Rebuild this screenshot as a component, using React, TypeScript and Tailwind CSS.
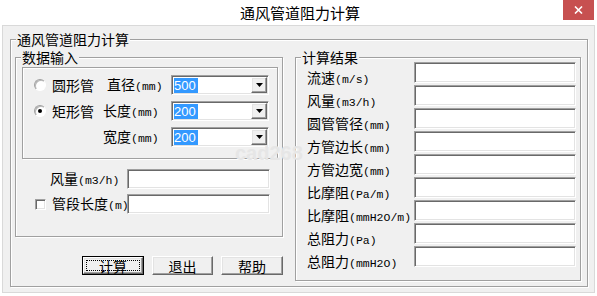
import React from "react";

const sunken =
  "border border-t-[#a0a0a0] border-l-[#a0a0a0] border-r-white border-b-white shadow-[inset_1px_1px_0_#696969,inset_-1px_-1px_0_#e3e3e3]";
const raised =
  "border border-t-white border-l-white border-r-[#696969] border-b-[#696969] shadow-[inset_-1px_-1px_0_#a0a0a0,inset_1px_1px_0_#e3e3e3]";

// ASCII part of a label (SimSun-like narrow glyphs)
function A({ children }: { children: React.ReactNode }) {
  return <span className="font-['Liberation_Mono',monospace] text-[11.5px]">{children}</span>;
}

function Group({
  label,
  className,
  children,
}: {
  label?: string;
  className?: string;
  children?: React.ReactNode;
}) {
  return (
    <div
      className={`relative border border-[#a0a0a0] shadow-[inset_1px_1px_0_#fff,1px_1px_0_#fff] ${className ?? ""}`}
    >
      {label && (
        <span className="absolute left-[5px] top-[-9px] bg-[#f0f0f0] px-px text-[14px] leading-[16px]">
          {label}
        </span>
      )}
      {children}
    </div>
  );
}

function Edit({ className }: { className?: string }) {
  return <div className={`bg-white ${sunken} ${className ?? ""}`} />;
}

function Combo({ value }: { value: string }) {
  return (
    <div className={`w-[98px] h-[20px] bg-white flex items-stretch p-px ${sunken}`}>
      <div className="flex-1 flex items-center pl-px">
        <span className="bg-[#3399ff] text-white font-['Liberation_Sans',sans-serif] text-[13px] leading-[15px] pr-[2px]">
          {value}
        </span>
      </div>
      <div className={`w-[16px] bg-[#f0f0f0] flex items-center justify-center ${raised}`}>
        <svg width="7" height="4" viewBox="0 0 7 4">
          <path d="M0 0H7L3.5 4Z" fill="#000" />
        </svg>
      </div>
    </div>
  );
}

function Radio({ checked }: { checked?: boolean }) {
  return (
    <span className="w-[12px] h-[12px] rounded-full bg-white flex items-center justify-center border border-t-[#a0a0a0] border-l-[#a0a0a0] border-r-white border-b-white shadow-[inset_1px_1px_0_#b8b8b8]">
      {checked && <span className="w-[4px] h-[4px] rounded-full bg-black" />}
    </span>
  );
}

function Check() {
  return <span className={`block w-[11px] h-[11px] bg-white ${sunken}`} />;
}

function Btn({ label, w, def }: { label: string; w: string; def?: boolean }) {
  if (def) {
    return (
      <button type="button" className={`${w} h-[19px] border border-black flex`}>
        <div className={`flex-1 flex bg-[#f0f0f0] ${raised}`}>
          <div className="flex-1 m-[2px] border border-dotted border-black flex items-center justify-center text-[14px] leading-[14px]">
            {label}
          </div>
        </div>
      </button>
    );
  }
  return (
    <button
      type="button"
      className={`${w} h-[19px] bg-[#f0f0f0] flex items-center justify-center text-[14px] leading-[14px] ${raised}`}
    >
      {label}
    </button>
  );
}

const results: React.ReactNode[] = [
  <>流速<A>(m/s)</A></>,
  <>风量<A>(m3/h)</A></>,
  <>圆管管径<A>(mm)</A></>,
  <>方管边长<A>(mm)</A></>,
  <>方管边宽<A>(mm)</A></>,
  <>比摩阻<A>(Pa/m)</A></>,
  <>比摩阻<A>(mmH2O/m)</A></>,
  <>总阻力<A>(Pa)</A></>,
  <>总阻力<A>(mmH2O)</A></>,
];

export default function App() {
  return (
    <div className="relative w-[597px] h-[296px] bg-white text-black font-['Noto_Sans_CJK_SC',sans-serif]">
      {/* Title bar */}
      <div className="h-[25px] flex items-center justify-center pl-[3px] text-[15px] leading-[20px]">
        通风管道阻力计算
      </div>
      <button
        type="button"
        aria-label="close"
        className="absolute right-[3px] top-0 w-[31px] h-[20px] bg-[#c75050] flex items-center justify-center"
      >
        <svg width="9" height="8" viewBox="0 0 9 8">
          <path d="M1 0.5L8 7.5M8 0.5L1 7.5" stroke="#fff" strokeWidth="1.6" />
        </svg>
      </button>

      {/* Window body */}
      <div className="ml-[2px] w-[593px] h-[268px] border border-[#d9d9d9] bg-[#f0f0f0] pt-[13px] pl-[7px]">
        <Group label="通风管道阻力计算" className="w-[578px] h-[248px]">
          <div className="flex gap-[12px] pl-[4px] pt-[17px]">
            {/* Left column */}
            <div className="w-[268px] flex flex-col">
              <Group label="数据输入" className="h-[180px]">
                <Group className="ml-[6px] mt-[9px] w-[256px] h-[92px]">
                  <div className="flex flex-col gap-[6px] pt-[7px] text-[14px] leading-[18px]">
                    <div className="h-[20px] flex items-center">
                      <div className="w-[29px] pl-[11px]">
                        <Radio />
                      </div>
                      <div className="w-[51px]">圆形管</div>
                      <div className="w-[68px] pl-[4px]">
                        直径<A>(mm)</A>
                      </div>
                      <Combo value="500" />
                    </div>
                    <div className="h-[20px] flex items-center">
                      <div className="w-[29px] pl-[11px]">
                        <Radio checked />
                      </div>
                      <div className="w-[51px]">矩形管</div>
                      <div className="w-[68px]">
                        长度<A>(mm)</A>
                      </div>
                      <Combo value="200" />
                    </div>
                    <div className="h-[20px] flex items-center">
                      <div className="w-[80px]" />
                      <div className="w-[68px]">
                        宽度<A>(mm)</A>
                      </div>
                      <Combo value="200" />
                    </div>
                  </div>
                </Group>

                <div className="mt-[10px] flex flex-col gap-[5px] text-[14px] leading-[18px]">
                  <div className="h-[20px] flex items-center">
                    <div className="w-[34px]" />
                    <div className="w-[77px]">
                      风量<A>(m3/h)</A>
                    </div>
                    <Edit className="w-[143px] h-[20px]" />
                  </div>
                  <div className="h-[20px] flex items-center">
                    <div className="w-[36px] pl-[19px]">
                      <Check />
                    </div>
                    <div className="w-[75px] whitespace-nowrap">
                      管段长度<A>(m)</A>
                    </div>
                    <Edit className="w-[143px] h-[20px]" />
                  </div>
                </div>
              </Group>

              <div className="mt-[19px] flex justify-end gap-[8px]">
                <Btn label="计算" w="w-[62px]" def />
                <Btn label="退出" w="w-[61px]" />
                <Btn label="帮助" w="w-[62px]" />
              </div>
            </div>

            {/* Right column */}
            <Group label="计算结果" className="w-[286px] h-[224px]">
              <div className="flex flex-col gap-[2px] pt-[4px] pl-[11px] text-[14px] leading-[18px]">
                {results.map((r, i) => (
                  <div key={i} className="h-[21px] flex items-start">
                    <div className="w-[107px] mt-[6px] whitespace-nowrap">{r}</div>
                    <Edit className="w-[162px] h-[21px]" />
                  </div>
                ))}
              </div>
            </Group>
          </div>
        </Group>
      </div>

      {/* faint site watermark */}
      <span className="pointer-events-none absolute left-[235px] top-[138px] font-['Liberation_Sans',sans-serif] font-bold text-[20px] text-[#e6e6e6]">
        cad268
      </span>
    </div>
  );
}
